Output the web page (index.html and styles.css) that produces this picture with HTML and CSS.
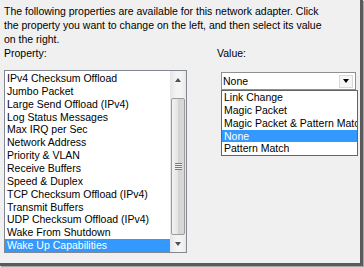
FILE: index.html
```html
<!DOCTYPE html>
<html>
<head>
<meta charset="utf-8">
<link rel="stylesheet" href="styles.css">
</head>
<body>
<div class="panel">
  <p class="intro">The following properties are available for this network adapter. Click the property you want to change on the left, and then select its value on the right.</p>
  <div class="columns">
    <div class="col-left">
      <div class="label">Property:</div>
      <div class="listbox">
        <ul class="items">
          <li>IPv4 Checksum Offload</li>
          <li>Jumbo Packet</li>
          <li>Large Send Offload (IPv4)</li>
          <li>Log Status Messages</li>
          <li>Max IRQ per Sec</li>
          <li>Network Address</li>
          <li>Priority &amp; VLAN</li>
          <li>Receive Buffers</li>
          <li>Speed &amp; Duplex</li>
          <li>TCP Checksum Offload (IPv4)</li>
          <li>Transmit Buffers</li>
          <li>UDP Checksum Offload (IPv4)</li>
          <li>Wake From Shutdown</li>
          <li class="selected">Wake Up Capabilities</li>
        </ul>
        <div class="scrollbar">
          <div class="sb-btn"><span class="tri-up"></span></div>
          <div class="sb-track">
            <div class="thumb"><span class="grip"></span></div>
          </div>
          <div class="sb-btn"><span class="tri-down"></span></div>
        </div>
      </div>
    </div>
    <div class="col-right">
      <div class="label">Value:</div>
      <div class="combo">
        <span class="combo-text">None</span>
        <span class="combo-btn"><span class="tri-down dark"></span></span>
        <ul class="dropdown">
          <li>Link Change</li>
          <li>Magic Packet</li>
          <li>Magic Packet &amp; Pattern Match</li>
          <li class="selected">None</li>
          <li>Pattern Match</li>
        </ul>
      </div>
    </div>
  </div>
</div>
</body>
</html>
```

FILE: styles.css
```css
* { box-sizing: border-box; }
html, body {
  margin: 0;
  padding: 0;
  background: #f0f0f0;
}
body {
  width: 364px;
  height: 267px;
  overflow: hidden;
  font-family: "Liberation Sans", Arial, sans-serif;
  font-size: 10.5px;
  color: #000;
}
.panel {
  width: 363px;
  height: 266px;
  background: #f0f0f0;
  border-right: 3px solid #5a5a5a;
  border-bottom: 3px solid #5a5a5a;
  box-shadow: 1px 1px 0 #a8a8a8;
}
.intro {
  margin: 0;
  padding: 4px 0 0 4px;
  width: 334px;
  line-height: 14px;
}
.columns {
  display: flex;
}
.label {
  line-height: 14px;
}
.col-left {
  margin-left: 4px;
  width: 183px;
}
.col-left .label {
  margin-bottom: 10px;
}
.listbox {
  width: 183px;
  height: 183px;
  border: 1px solid #828790;
  background: #fff;
  display: flex;
}
.items {
  list-style: none;
  margin: 0;
  padding: 1px 0 0 0;
  flex: 1;
}
.items li, .dropdown li {
  height: 12.86px;
  line-height: 12.86px;
  padding-left: 2px;
  white-space: nowrap;
}
.selected {
  background: #3399ff;
  color: #fff;
}
.scrollbar {
  width: 16px;
  display: flex;
  flex-direction: column;
  background: linear-gradient(to right, #e6e6e6, #f4f4f4 40%, #f4f4f4 70%, #e8e8e8);
}
.sb-btn {
  height: 17px;
  display: flex;
  align-items: center;
  justify-content: center;
}
.sb-track {
  flex: 1;
  padding: 10px 1px 0 1px;
}
.thumb {
  height: 137px;
  border: 1px solid #9b9b9b;
  border-radius: 2px;
  background: linear-gradient(to right, #f2f2f2, #e4e4e4 50%, #d4d4d4 51%, #d8d8d8);
  display: flex;
  align-items: center;
  justify-content: center;
}
.grip {
  width: 7px;
  height: 7px;
  background: repeating-linear-gradient(to bottom, #7a7a7a 0, #7a7a7a 1px, #f0f0f0 1px, #f0f0f0 2px);
}
.tri-up, .tri-down {
  width: 0;
  height: 0;
  border-left: 3.5px solid transparent;
  border-right: 3.5px solid transparent;
}
.tri-up { border-bottom: 4px solid #505050; }
.tri-down { border-top: 4px solid #505050; }
.tri-down.dark { border-top-color: #000; }
.col-right {
  margin-left: 30px;
  width: 143px;
}
.combo {
  position: relative;
  margin: 12px 0 0 4px;
  width: 135px;
  height: 18px;
  border: 1px solid #8e8f8f;
  background: #fff;
  display: flex;
  align-items: center;
  justify-content: space-between;
}
.combo-text {
  padding-left: 1px;
  line-height: 14px;
}
.combo-btn {
  width: 14px;
  height: 13px;
  margin-right: 2px;
  border: 1px solid #d9d9d9;
  background: #f6f6f6;
  display: flex;
  align-items: center;
  justify-content: center;
}
.dropdown {
  position: absolute;
  left: -1px;
  top: 17px;
  width: 137px;
  margin: 0;
  padding: 0;
  list-style: none;
  background: #fff;
  border: 1px solid #646464;
  overflow: hidden;
}
```
